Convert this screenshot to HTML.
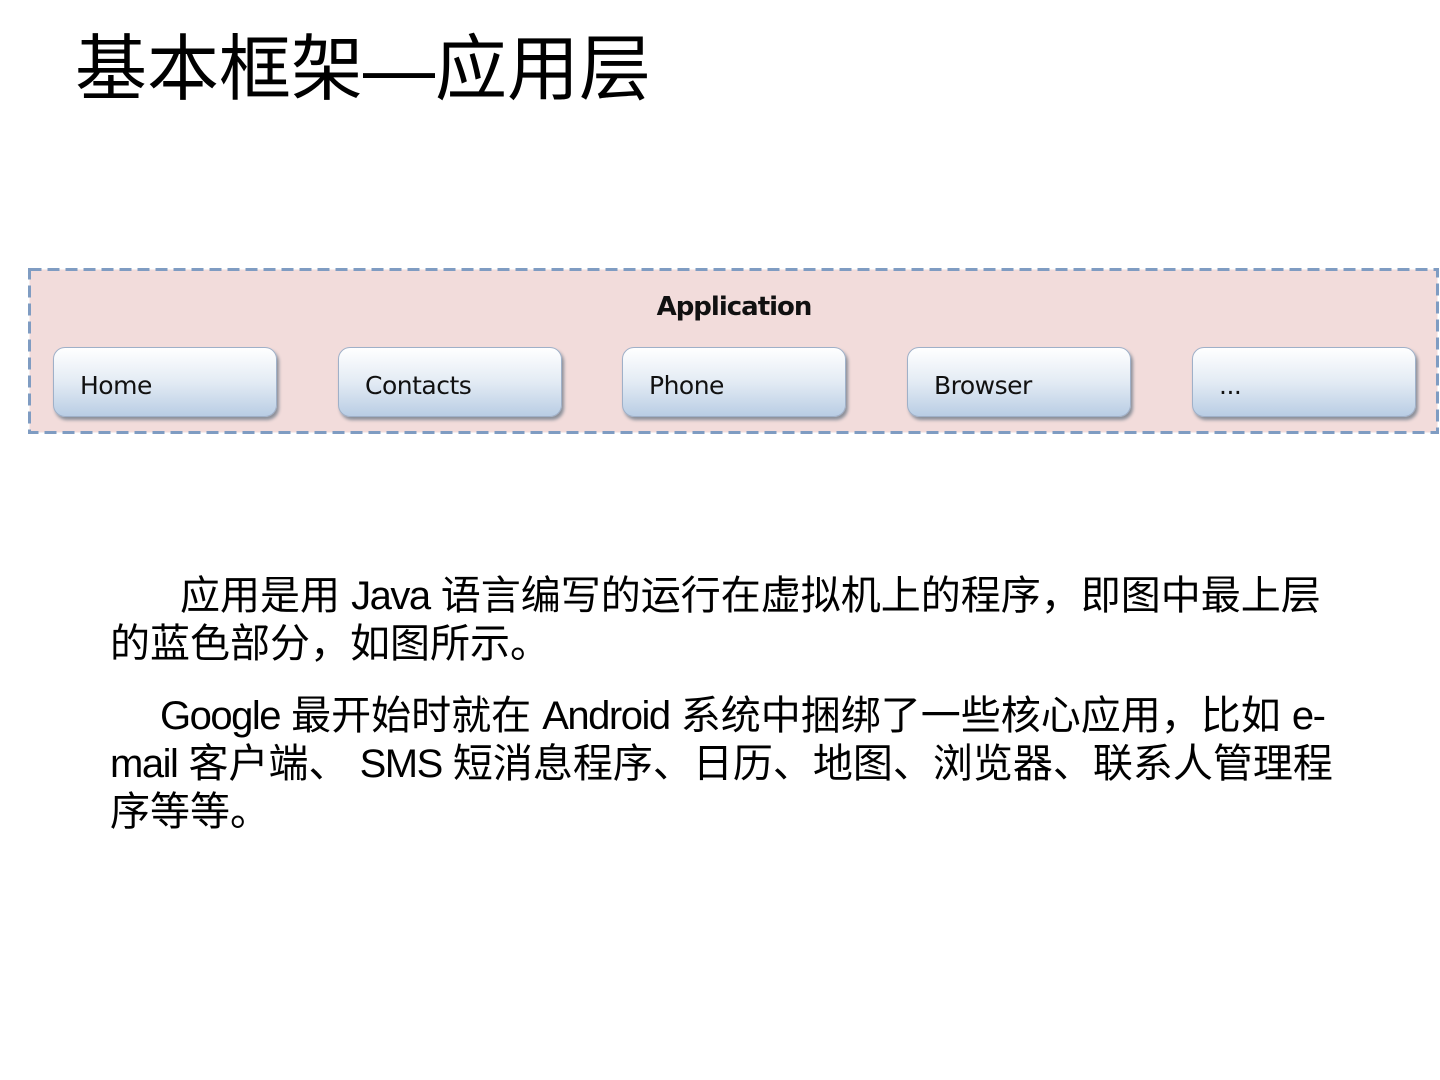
<!DOCTYPE html>
<html><head><meta charset="utf-8"><style>
body{margin:0;width:1440px;height:1080px;background:#fff;position:relative;overflow:hidden;font-family:"Liberation Sans","Noto Sans CJK SC",sans-serif;color:#000}
.t{position:absolute;left:75px;top:22px;font-size:72px;line-height:96px;white-space:nowrap}
.box{position:absolute;left:28px;top:268px;width:1412px;height:167px}
.app{position:absolute;left:0;right:0;top:24px;text-align:center;font-weight:bold;font-size:26px;font-family:"DejaVu Sans",sans-serif;color:#111;letter-spacing:-1px}
.b{position:absolute;top:79px;width:224px;height:70px;border-radius:12px;border:1px solid #9fb0c8;background:linear-gradient(#ffffff 0%,#e3ebf4 50%,#b9cde4 100%);box-shadow:2px 3px 3px #8a8f99;box-sizing:border-box;font-family:"DejaVu Sans",sans-serif;font-size:25px;line-height:76px;padding-left:26px;color:#111;letter-spacing:-0.5px}
.p{position:absolute;left:110px;font-size:40px;line-height:48px;white-space:nowrap}
.l{letter-spacing:-1.5px}
</style></head><body>
<div class="t">基本框架—应用层</div>
<div class="box">
<svg width="1412" height="167" style="position:absolute;left:0;top:0"><rect x="1.5" y="1.5" width="1408" height="163" fill="#f2dcdb" stroke="#7f9cc2" stroke-width="3" stroke-dasharray="12 6"/></svg>
<div class="app">Application</div>
<div class="b" style="left:25px">Home</div>
<div class="b" style="left:310px">Contacts</div>
<div class="b" style="left:594px">Phone</div>
<div class="b" style="left:879px">Browser</div>
<div class="b" style="left:1164px">...</div>
</div>
<div class="p" style="top:572px"><span style="padding-left:70px"></span>应用是用 <span class="l">Java</span> 语言编写的运行在虚拟机上的程序，即图中最上层<br>的蓝色部分，如图所示。</div>
<div class="p" style="top:692px"><span style="padding-left:50px"></span><span class="l">Google</span> 最开始时就在 <span class="l">Android</span> 系统中捆绑了一些核心应用，比如 <span class="l">e-</span><br><span class="l">mail</span> 客户端、 <span class="l">SMS</span> 短消息程序、日历、地图、浏览器、联系人管理程<br>序等等。</div>
</body></html>
